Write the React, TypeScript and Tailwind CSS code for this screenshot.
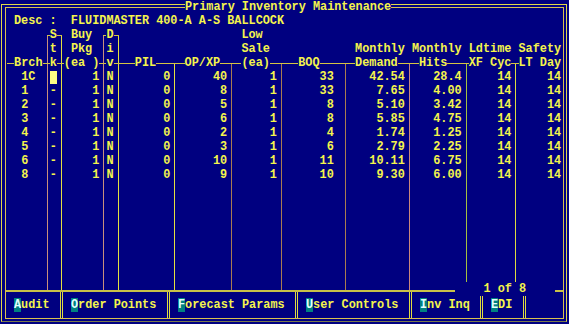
import type { ReactNode } from 'react'

type Kind = 'open' | 'close' | 'rule'

type ColSpec = {
  w: string
  cell: string
  r2?: ReactNode
  r3?: ReactNode
  r4: ReactNode
  values: ReactNode[]
}

type Item = { sep: Kind; line: string } | { col: ColSpec }

const Cursor = <span className="h-[13px] w-[7px] bg-[#fcfc84]" />

const ROWS: ReactNode[][] = [
  ['1C', Cursor, '1', 'N', '0', '40', '1', '33', '42.54', '28.4', '14', '14'],
  ['1', '-', '1', 'N', '0', '8', '1', '33', '7.65', '4.00', '14', '14'],
  ['2', '-', '1', 'N', '0', '5', '1', '8', '5.10', '3.42', '14', '14'],
  ['3', '-', '1', 'N', '0', '6', '1', '8', '5.85', '4.75', '14', '14'],
  ['4', '-', '1', 'N', '0', '2', '1', '4', '1.74', '1.25', '14', '14'],
  ['5', '-', '1', 'N', '0', '3', '1', '6', '2.79', '2.25', '14', '14'],
  ['6', '-', '1', 'N', '0', '10', '1', '11', '10.11', '6.75', '14', '14'],
  ['8', '-', '1', 'N', '0', '9', '1', '10', '9.30', '6.00', '14', '14'],
]

const col = (i: number) => ROWS.map((r) => r[i])

// horizontal box-drawing rule, 1px through the middle of the row
function Rule({ w }: { w?: '1' | '2' }) {
  if (w === '1') return <div className="h-px w-[1ch] shrink-0 bg-[#d4c444]" />
  if (w === '2') return <div className="h-px w-[2ch] shrink-0 bg-[#d4c444]" />
  return <div className="h-px flex-1 bg-[#d4c444]" />
}

// vertical line sitting ~4px into a one-character cell
function VLine({ line, className = '' }: { line: string; className?: string }) {
  return (
    <div className={`flex ${className}`}>
      <div className="w-[4px] shrink-0" />
      <div className={`w-px shrink-0 ${line}`} />
    </div>
  )
}

function Sep({ kind, line }: { kind: Kind; line: string }) {
  return (
    <div className="flex w-[1ch] shrink-0 flex-col">
      {kind === 'rule' ? (
        <div className="h-[28px] shrink-0" />
      ) : (
        <>
          {/* box corner around the S / D headings */}
          <div className="flex h-[14px] shrink-0 flex-col">
            <div className="h-[7px] shrink-0" />
            <div className="flex h-px shrink-0">
              {kind === 'close' ? (
                <div className="h-px w-[5px] bg-[#d4c444]" />
              ) : (
                <>
                  <div className="w-[4px] shrink-0" />
                  <div className="h-px flex-1 bg-[#d4c444]" />
                </>
              )}
            </div>
            <VLine line={line} className="h-[6px] shrink-0" />
          </div>
          <VLine line={line} className="h-[14px] shrink-0" />
        </>
      )}
      <div className="flex h-[14px] shrink-0 flex-col">
        {kind === 'rule' ? (
          <div className="h-[7px] shrink-0" />
        ) : (
          <VLine line={line} className="h-[7px] shrink-0" />
        )}
        <div className="h-px shrink-0 bg-[#d4c444]" />
        <VLine line={line} className="h-[6px] shrink-0" />
      </div>
      <VLine line={line} className="flex-1" />
    </div>
  )
}

function Col({ spec }: { spec: ColSpec }) {
  return (
    <div className={`flex shrink-0 flex-col ${spec.w}`}>
      <div className="h-[14px] whitespace-pre">{spec.r2}</div>
      <div className="h-[14px] whitespace-pre">{spec.r3}</div>
      <div className="flex h-[14px] items-center whitespace-pre">{spec.r4}</div>
      {spec.values.map((v, i) => (
        <div key={i} className={`h-[14px] whitespace-pre ${spec.cell}`}>
          {v}
        </div>
      ))}
    </div>
  )
}

const ITEMS: Item[] = [
  {
    col: {
      w: 'w-[5ch]',
      cell: 'pl-[2ch]',
      r4: (
        <>
          <Rule />
          <span>Brch</span>
        </>
      ),
      values: col(0),
    },
  },
  { sep: 'open', line: 'bg-[#c8907c]' },
  {
    col: {
      w: 'w-[1ch]',
      cell: 'flex items-center justify-center',
      r2: 'S',
      r3: 't',
      r4: 'k',
      values: col(1),
    },
  },
  { sep: 'close', line: 'bg-[#e4e040]' },
  {
    col: {
      w: 'w-[5ch]',
      cell: 'text-right',
      r2: <span className="pl-[1ch]">Buy</span>,
      r3: <span className="pl-[1ch]">Pkg</span>,
      r4: '(ea )',
      values: col(2),
    },
  },
  { sep: 'open', line: 'bg-[#c8907c]' },
  {
    col: {
      w: 'w-[1ch]',
      cell: 'text-center',
      r2: 'D',
      r3: 'i',
      r4: 'v',
      values: col(3),
    },
  },
  { sep: 'close', line: 'bg-[#e4e040]' },
  {
    col: {
      w: 'w-[7ch]',
      cell: 'text-right',
      r4: (
        <>
          <Rule />
          <span>PIL</span>
          <Rule />
        </>
      ),
      values: col(4),
    },
  },
  { sep: 'rule', line: 'bg-[#e4e040]' },
  {
    col: {
      w: 'w-[7ch]',
      cell: 'text-right',
      r4: (
        <>
          <Rule />
          <span>OP/XP</span>
          <Rule />
        </>
      ),
      values: col(5),
    },
  },
  { sep: 'rule', line: 'bg-[#a87c50]' },
  {
    col: {
      w: 'w-[6ch]',
      cell: 'text-right',
      r2: <span className="pl-[1ch]">Low</span>,
      r3: <span className="pl-[1ch]">Sale</span>,
      r4: (
        <>
          <Rule />
          <span>(ea)</span>
          <Rule />
        </>
      ),
      values: col(6),
    },
  },
  { sep: 'rule', line: 'bg-[#a87c50]' },
  {
    col: {
      w: 'w-[8ch]',
      cell: 'pr-[1ch] text-right',
      r4: (
        <>
          <Rule w="2" />
          <span>BOQ</span>
          <Rule />
        </>
      ),
      values: col(7),
    },
  },
  { sep: 'rule', line: 'bg-[#a87c50]' },
  {
    col: {
      w: 'w-[8ch]',
      cell: 'text-right',
      r3: <span className="pl-[1ch]">Monthly</span>,
      r4: (
        <>
          <Rule />
          <span>Demand</span>
          <Rule />
        </>
      ),
      values: col(8),
    },
  },
  { sep: 'rule', line: 'bg-[#c8887c]' },
  {
    col: {
      w: 'w-[7ch]',
      cell: 'text-right',
      r3: 'Monthly',
      r4: (
        <>
          <Rule w="1" />
          <span>Hits</span>
          <Rule />
        </>
      ),
      values: col(9),
    },
  },
  { sep: 'rule', line: 'bg-[#a4c040]' },
  {
    col: {
      w: 'w-[6ch]',
      cell: 'text-right',
      r3: 'Ldtime',
      r4: 'XF Cyc',
      values: col(10),
    },
  },
  { sep: 'rule', line: 'bg-[#dcdc40]' },
  {
    col: {
      w: 'w-[6ch]',
      cell: 'text-right',
      r3: 'Safety',
      r4: 'LT Day',
      values: col(11),
    },
  },
]

const BUTTONS = [
  { w: 'w-[57px]', key: 'A', rest: 'udit' },
  { w: 'w-[107px]', key: 'O', rest: 'rder Points' },
  { w: 'w-[128px]', key: 'F', rest: 'orecast Params' },
  { w: 'w-[114px]', key: 'U', rest: 'ser Controls' },
  { w: 'w-[71px]', key: 'I', rest: 'nv Inq' },
  { w: 'w-[43px]', key: 'E', rest: 'DI' },
]

export default function App() {
  return (
    <div className="relative h-[324px] w-[569px] overflow-hidden bg-[#000080] pl-px pt-1 font-['Liberation_Mono',monospace] text-[11.85px] leading-[14px] font-bold text-[#f4f44c]">
      <div className="h-[318px] w-[566px] border border-[#e0d848] border-b-[#7c7c4c] pb-[2px] pl-[3px] pr-[2px] pt-[2px]">
        <div className="flex h-full flex-col border border-[#d8c050] pt-[6px]">
          <div className="h-[14px] whitespace-pre pl-[8px]">
            Desc :  FLUIDMASTER 400-A A-S BALLCOCK
          </div>

          {/* Branch table */}
          <div className="flex flex-1 pl-px">
            {ITEMS.map((it, i) =>
              'sep' in it ? (
                <Sep key={i} kind={it.sep} line={it.line} />
              ) : (
                <Col key={i} spec={it.col} />
              ),
            )}
          </div>

          {/* Function key bar */}
          <div className="flex h-[28px] border-t-2 border-[#c8c048]">
            {BUTTONS.map((b) => (
              <div
                key={b.key}
                className={`flex shrink-0 items-center border-r-[3px] border-double border-[#e0dc40] pl-[8px] ${b.w}`}
              >
                <span className="bg-[#008080] text-[#e4ffff]">{b.key}</span>
                <span className="whitespace-pre">{b.rest}</span>
              </div>
            ))}
            <div className="flex-1" />
          </div>
        </div>
      </div>

      <div className="absolute left-[185px] top-0 h-[14px] whitespace-pre bg-[#000080]">
        Primary Inventory Maintenance
      </div>
      <div className="absolute left-[455px] top-[282px] h-[14px] w-[100px] bg-[#000080] pl-[4ch]">
        1 of 8
      </div>
    </div>
  )
}
